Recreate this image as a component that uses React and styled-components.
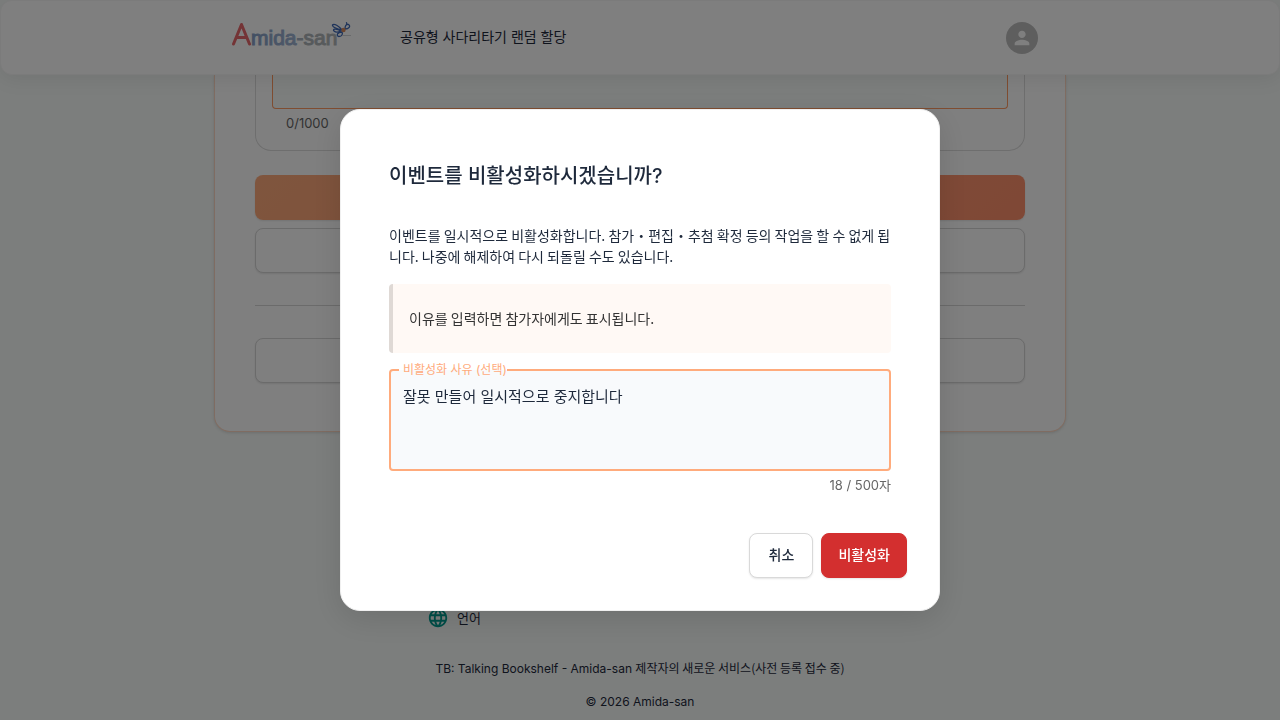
import React from "react";
import styled, { createGlobalStyle } from "styled-components";
import { MdLanguage, MdPerson } from "react-icons/md";

const Logo = () => (
  <LogoSvg viewBox="0 0 120 32" role="img" aria-label="Amida-san">
    <defs>
      <linearGradient id="logoText" x1="0" x2="1">
        <stop offset="0" stopColor="#869fc6" />
        <stop offset="0.5" stopColor="#9db2d2" />
        <stop offset="0.6" stopColor="#abb2b8" />
        <stop offset="1" stopColor="#b2b6b8" />
      </linearGradient>
    </defs>
    <path
      d="M1.5 22 L9.5 2.5 L17.5 22 M4.5 15.5 H14.5"
      fill="none"
      stroke="#e8696d"
      strokeWidth="3"
      strokeLinecap="round"
      strokeLinejoin="round"
    />
    <LogoText x="19" y="23" fill="url(#logoText)" stroke="url(#logoText)">
      mida-san
    </LogoText>
    <g fill="none" stroke="#3f68b5" strokeWidth="1.3" strokeLinecap="round">
      <path d="M110 8 C107 4 102 1 100.5 3 C100 5 105 7 110 8Z" />
      <path d="M109 9 C104 6 100 7 102 9 C104 11 107 10 109 9Z" />
      <path d="M110 10 C105 10 104 14 107 14.5 C110 14.5 111 12 110 10Z" />
      <path d="M113 7 C117 7 119 4 116.5 2.5 C114 2 113 4 113 7Z" />
      <path d="M115 2.5 L114.5 0.7" />
    </g>
    <circle cx="111.5" cy="8" r="2.2" fill="#d98a5a" />
    <path d="M110 13.5 H119" stroke="#d2d4d6" strokeWidth="1" />
  </LogoSvg>
);

const App = () => (
  <Page>
    <GlobalStyle />
    <Header>
      <HeaderInner>
        <LogoLink href="#">
          <Logo />
        </LogoLink>
        <NavLink href="#">공유형 사다리타기 랜덤 할당</NavLink>
        <Avatar type="button" aria-label="계정">
          <MdPerson size={22} />
        </Avatar>
      </HeaderInner>
    </Header>

    <Card>
      <MemoBox>
        <MemoInput aria-label="메모" />
        <MemoCount>0/1000</MemoCount>
      </MemoBox>
      <Actions>
        <WideButton type="button" $primary aria-label="저장" />
        <WideButton type="button" aria-label="취소" />
      </Actions>
      <Divider />
      <WideButton type="button" aria-label="비활성화" />
    </Card>

    <Footer>
      <Language href="#">
        <MdLanguage size={22} />
        언어
      </Language>
      <FooterLink href="#">
        TB: Talking Bookshelf - Amida-san{" "}
        <Korean>제작자의 새로운 서비스(사전 등록 접수 중)</Korean>
      </FooterLink>
      <Copyright>© 2026 Amida-san</Copyright>
    </Footer>

    <Backdrop>
      <Dialog role="dialog" aria-modal="true" aria-labelledby="dialog-title">
        <DialogBody>
          <Title id="dialog-title">이벤트를 비활성화하시겠습니까?</Title>
          <Description>
            이벤트를 일시적으로 비활성화합니다. 참가・편집・추첨 확정 등의 작업을 할
            수 없게 됩니다. 나중에 해제하여 다시 되돌릴 수도 있습니다.
          </Description>
          <Notice>이유를 입력하면 참가자에게도 표시됩니다.</Notice>
          <Field>
            <FieldLabel htmlFor="reason">비활성화 사유 (선택)</FieldLabel>
            <Reason id="reason" defaultValue="잘못 만들어 일시적으로 중지합니다" />
          </Field>
          <ReasonCount>18 / 500자</ReasonCount>
        </DialogBody>
        <DialogActions>
          <Button type="button">취소</Button>
          <Button type="button" $danger>
            비활성화
          </Button>
        </DialogActions>
      </Dialog>
    </Backdrop>
  </Page>
);

export default App;

const koreanFont = '"Noto Sans CJK KR", Inter, sans-serif';

const GlobalStyle = createGlobalStyle`
  * {
    box-sizing: border-box;
  }
  body {
    margin: 0;
    overflow: hidden;
    background: #f8fcfa;
    color: #1e293b;
    font-family: Inter, "Noto Sans CJK KR", sans-serif;
    font-size: 13px;
  }
  button,
  textarea {
    font-family: inherit;
  }
  a {
    color: inherit;
    text-decoration: none;
  }
`;

const Page = styled.div`
  min-height: 100vh;
`;

const Header = styled.header`
  position: relative;
  z-index: 1;
  background: #fff;
  border: 1px solid #f6f6f6;
  border-radius: 12px;
  box-shadow: 0 4px 20px rgba(0, 0, 0, 0.08);
`;

const HeaderInner = styled.div`
  display: flex;
  align-items: center;
  max-width: 816px;
  height: 73px;
  margin: 0 auto;
`;

const LogoLink = styled.a`
  display: flex;
  width: 168px;
`;

const LogoSvg = styled.svg`
  width: 120px;
  height: 32px;
`;

const LogoText = styled.text`
  font-family: "Liberation Sans", sans-serif;
  font-size: 21px;
  stroke-width: 1px;
`;

const NavLink = styled.a`
  padding-bottom: 3px;
  font-size: 14px;
`;

const Avatar = styled.button`
  display: flex;
  align-items: center;
  justify-content: center;
  width: 32px;
  height: 32px;
  margin: 0 10px 0 auto;
  padding: 0;
  border: 0;
  border-radius: 50%;
  background: #bdbdbd;
  color: #fff;
`;

const Card = styled.main`
  width: 852px;
  max-width: 100%;
  margin: 0 auto;
  padding: 0 40px 48px;
  background: #fff;
  border: 1px solid #ffd9c4;
  border-top: 0;
  border-radius: 0 0 16px 16px;
  box-shadow: 0 1px 3px rgba(0, 0, 0, 0.12);
`;

const MemoBox = styled.section`
  padding: 0 16px 16px;
  border: 1px solid #dcdcdc;
  border-top: 0;
  border-radius: 0 0 16px 16px;
`;

const MemoInput = styled.textarea`
  display: block;
  width: 100%;
  height: 34px;
  border: 1px solid #ff9a62;
  border-top: 0;
  border-radius: 0 0 4px 4px;
  background: #f8fcfa;
  resize: none;
`;

const MemoCount = styled.div`
  padding: 4px 14px 0;
  color: #666;
  line-height: 21px;
`;

const Actions = styled.div`
  display: grid;
  gap: 8px;
  margin-top: 24px;
`;

const WideButton = styled.button`
  display: block;
  width: 100%;
  height: 45px;
  border: ${props => (props.$primary ? "0" : "1px solid #d6d6d6")};
  border-radius: 8px;
  background: ${props =>
    props.$primary ? "linear-gradient(135deg, #ffab7c, #ff906c)" : "#fff"};
  box-shadow: 0 1px 2px rgba(0, 0, 0, 0.1);
`;

const Divider = styled.hr`
  height: 1px;
  margin: 32px 0;
  border: 0;
  background: #d6d6d6;
`;

const Footer = styled.footer`
  max-width: 426px;
  margin: 0 auto;
  padding-top: 175px;
  text-align: center;
  font-size: 12px;
`;

const Language = styled.a`
  display: flex;
  align-items: center;
  gap: 8px;
  height: 22px;
  font-size: 13px;
  line-height: 20px;

  svg {
    color: #009c90;
  }
`;

const FooterLink = styled.a`
  display: block;
  margin-top: 28px;
  line-height: 22px;
  white-space: nowrap;
`;

const Korean = styled.span`
  font-family: ${koreanFont};
`;

const Copyright = styled.div`
  margin-top: 11px;
  line-height: 22px;
`;

const Backdrop = styled.div`
  position: fixed;
  inset: 0;
  z-index: 2;
  display: flex;
  align-items: center;
  justify-content: center;
  background: rgba(0, 0, 0, 0.5);
`;

const Dialog = styled.div`
  width: 600px;
  max-width: calc(100% - 64px);
  background: #fff;
  border: 1px solid #f0f0f0;
  border-radius: 20px;
  box-shadow: 0 8px 32px rgba(0, 0, 0, 0.12);
`;

const DialogBody = styled.div`
  padding: 48px 48px 0;
`;

const Title = styled.h2`
  margin: 0 0 31px;
  font-size: 20px;
  font-weight: 500;
  line-height: 36px;
`;

const Description = styled.p`
  margin: 0 0 17px;
  font-family: ${koreanFont};
  font-size: 14px;
  line-height: 21px;
`;

const Notice = styled.div`
  margin-bottom: 16px;
  padding: 24px 16px;
  border-left: 4px solid #dfd9d5;
  border-radius: 4px;
  background: #fff9f5;
  color: #333;
  font-family: ${koreanFont};
  font-size: 14px;
  line-height: 21px;
`;

const Field = styled.div`
  position: relative;
`;

const FieldLabel = styled.label`
  position: absolute;
  top: -8px;
  left: 10px;
  padding: 0 0 0 4px;
  background: linear-gradient(#fff 50%, #f8fafc 50%);
  color: #ffab7c;
  font-size: 12px;
  line-height: 18px;
`;

const Reason = styled.textarea`
  display: block;
  width: 100%;
  height: 102px;
  padding: 14px 12px;
  border: 2px solid #ffab7c;
  border-radius: 4px;
  outline: 0;
  background: #f8fafc;
  color: #1e293b;
  font-size: 15px;
  line-height: 23px;
  resize: none;
`;

const ReasonCount = styled.div`
  margin-top: 4px;
  color: #666;
  line-height: 21px;
  text-align: right;
`;

const DialogActions = styled.div`
  display: flex;
  justify-content: flex-end;
  gap: 8px;
  padding: 37px 32px 32px;
`;

const Button = styled.button`
  min-width: 64px;
  height: 45px;
  padding: 0 16px 3px;
  border: 1px solid ${props => (props.$danger ? "#d32f2f" : "#d9d9d9")};
  border-radius: 8px;
  background: ${props => (props.$danger ? "#d32f2f" : "#fff")};
  box-shadow: 0 1px 2px rgba(0, 0, 0, 0.1);
  color: ${props => (props.$danger ? "#fff" : "#1e293b")};
  font-size: 14px;
  font-weight: 500;
`;
